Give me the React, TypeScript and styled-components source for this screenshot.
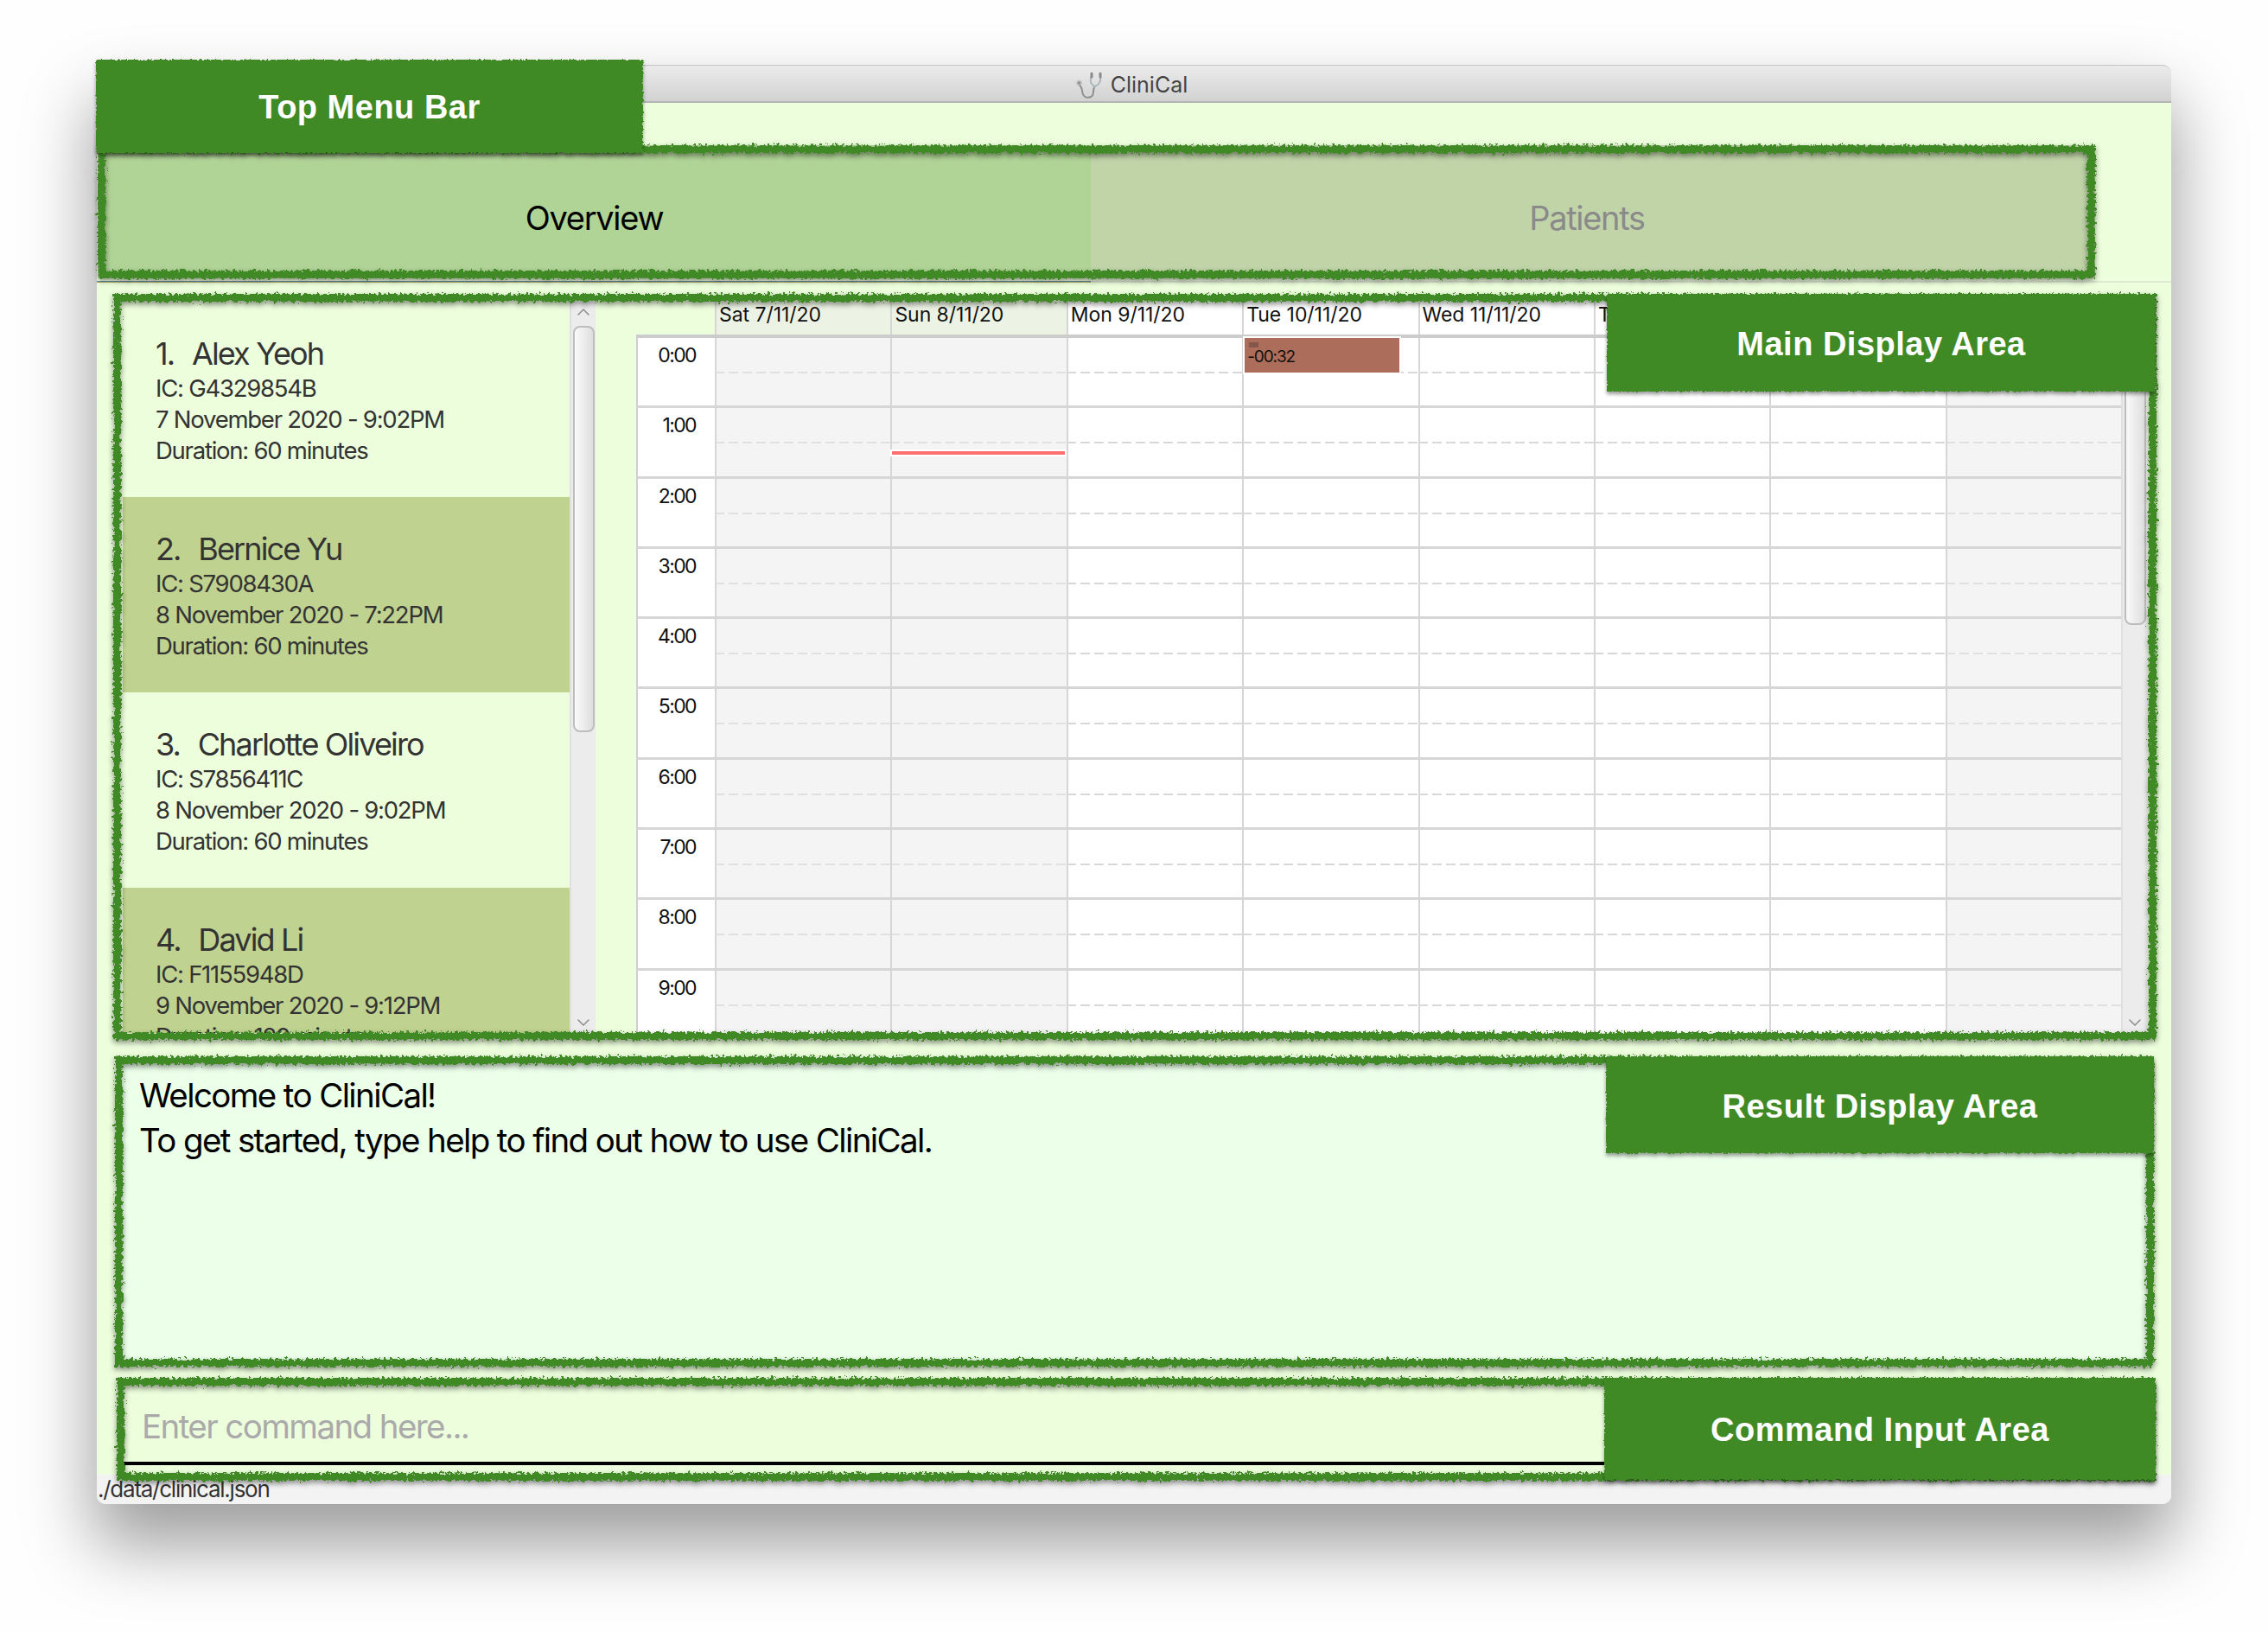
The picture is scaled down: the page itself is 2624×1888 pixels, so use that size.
import styled, { createGlobalStyle } from "styled-components";
import { ChevronDown, ChevronUp } from "lucide-react";

const GlobalStyle = createGlobalStyle`
  html, body {
    margin: 0;
    background: #fefefe;
  }
`;

const GREEN = "#3f8a28";
const UI_FONT = `Inter, "Liberation Sans", sans-serif`;

const Page = styled.div`
  width: 2624px;
  height: 1888px;
  box-sizing: border-box;
  padding: 75px 112px 0;
  overflow: hidden;
  font-family: ${UI_FONT};
`;
const Window = styled.div`
  position: relative;
  width: 2400px;
  height: 1665px;
  display: flex;
  flex-direction: column;
  border-radius: 10px;
  background: #ecfedc;
  box-shadow: 0 44px 80px 4px rgba(0, 0, 0, 0.38);
`;
const TitleBar = styled.div`
  height: 44px;
  flex-shrink: 0;
  box-sizing: border-box;
  display: flex;
  align-items: center;
  justify-content: center;
  gap: 9px;
  padding: 3px 6px 0 0;
  border-radius: 10px 10px 0 0;
  border-top: 1px solid #c4c4c4;
  border-bottom: 2px solid #b4b4b4;
  background: linear-gradient(#ebebeb, #d2d2d2);
  color: #444;
  font-size: 25px;
`;
const TabArea = styled.div`
  height: 208px;
  flex-shrink: 0;
  box-sizing: border-box;
  padding: 49px 0 0 1px;
  border-bottom: 2px solid #dfe8d4;
  position: relative;
`;
const Edge = styled.div<{ $bottom?: number }>`
  position: absolute;
  inset: 0 0 ${(p) => -(p.$bottom ?? 0)}px 0;
  box-sizing: border-box;
  border: 9px solid ${GREEN};
  filter: url(#rough) drop-shadow(0 3px 3px rgba(0, 0, 0, 0.45));
  pointer-events: none;
  z-index: 3;
`;
const TabFrame = styled.div`
  position: relative;
  width: 2311px;
  height: 154px;
  display: flex;
  background: #c0d4a8;
`;
const Tab = styled.div<{ $active?: boolean }>`
  width: ${(p) => (p.$active ? 1149 : 1148)}px;
  display: flex;
  align-items: center;
  justify-content: center;
  padding-top: 14px;
  box-sizing: border-box;
  font-size: 38px;
  letter-spacing: -1.3px;
  color: ${(p) => (p.$active ? "#000" : "#8a8a8a")};
  background: ${(p) => (p.$active ? "#b0d396" : "transparent")};
`;
const SelectedLine = styled.div`
  position: absolute;
  left: 0;
  bottom: -2px;
  width: 1150px;
  height: 2px;
  background: linear-gradient(#3f78c8, #d9c84a);
`;
const Body = styled.div`
  flex: 1;
  min-height: 0;
  display: flex;
  flex-direction: column;
`;
const MainFrame = styled.section`
  position: relative;
  height: 863px;
  flex-shrink: 0;
  box-sizing: border-box;
  margin: 13px 17px 0 19px;
  padding: 9px 10px 8px 11px;
  display: flex;
`;
const ListPane = styled.div`
  width: 517px;
  flex-shrink: 0;
  overflow: hidden;
`;
const Card = styled.div<{ $odd: boolean }>`
  height: 226px;
  box-sizing: border-box;
  padding: 38px 0 0 38px;
  color: #333;
  background: ${(p) => (p.$odd ? "#ecfedc" : "#bfd28f")};
`;
const CardTitle = styled.div`
  font-size: 36px;
  line-height: 44px;
  letter-spacing: -1.85px;
  white-space: pre;
`;
const CardNumber = styled.span`
  margin-right: 4px;
`;
const CardLine = styled.div`
  font-size: 27.5px;
  line-height: 36px;
  letter-spacing: -1.25px;
`;
const ScrollTrack = styled.div<{ $thumbTop: number; $thumbHeight: number }>`
  position: relative;
  width: 30px;
  flex-shrink: 0;
  overflow: hidden;
  display: flex;
  flex-direction: column;
  justify-content: space-between;
  align-items: center;
  background: #ececec;
  border-left: 2px solid #e0e0e0;
  box-sizing: border-box;
  color: #8c8c8c;

  &::before {
    content: "";
    position: absolute;
    left: 2px;
    right: 1px;
    top: ${(p) => p.$thumbTop}px;
    height: ${(p) => p.$thumbHeight}px;
    box-sizing: border-box;
    border: 2px solid #bdbdbd;
    border-radius: 8px;
    background: linear-gradient(90deg, #fafafa, #dedede);
  }
`;
const Calendar = styled.div`
  width: 1718px;
  margin-left: 47px;
  flex-shrink: 0;
  overflow: hidden;
`;
const CalHeader = styled.div`
  display: grid;
  grid-template-columns: 91px repeat(8, 203.4px);
  height: 38px;
`;
const DayHead = styled.div<{ $weekend?: boolean; $blank?: boolean }>`
  box-sizing: border-box;
  padding-left: 3px;
  font-size: 23px;
  line-height: 31px;
  letter-spacing: -0.05px;
  color: #111;
  white-space: nowrap;
  overflow: hidden;
  border-left: ${(p) => (p.$blank ? "none" : "2px solid #d6d6d6")};
  background: ${(p) => (p.$blank ? "transparent" : p.$weekend ? "#edf3e4" : "#fff")};
`;
const CalGrid = styled.div`
  display: grid;
  grid-template-columns: 91px repeat(8, 203.4px);
  grid-auto-rows: 81.3px;
  border-top: 4px solid #cccccc;
`;
const TimeCell = styled.div`
  box-sizing: border-box;
  text-align: right;
  padding: 5px 22px 0 0;
  font-size: 23px;
  line-height: 30px;
  letter-spacing: -1.6px;
  color: #111;
  background: #fff;
  border-left: 2px solid #cfcfcf;
  border-bottom: 3px solid #d6d6d6;
`;
const SlotCell = styled.div<{ $weekend: boolean }>`
  position: relative;
  box-sizing: border-box;
  background: ${(p) => (p.$weekend ? "#f4f4f4" : "#fff")};
  border-left: 2px solid #d6d6d6;
  border-bottom: 3px solid #d6d6d6;

  &::after {
    content: "";
    position: absolute;
    left: -2px;
    right: 0;
    top: 39px;
    height: 2px;
    background: repeating-linear-gradient(90deg, #d8d8d8 0 11px, transparent 11px 16px);
    opacity: ${(p) => (p.$weekend ? 0.7 : 1)};
  }
`;
const Appointment = styled.div`
  position: absolute;
  left: 1px;
  top: 0;
  width: 179px;
  height: 40px;
  box-sizing: content-box;
  background: #ac6e5a;
  box-shadow: 0 0 0 2px #fff;
  color: #111;
  font-size: 19px;
  line-height: 22px;
  letter-spacing: -1.1px;
  padding: 0;
  z-index: 1;

  &::before {
    content: "";
    display: block;
    width: 11px;
    height: 6px;
    margin: 5px 0 0 5px;
    background: #85574a;
  }
`;
const AppointmentText = styled.div`
  padding-left: 3px;
`;
const NowLine = styled.div`
  position: absolute;
  left: 0;
  right: 2px;
  top: 50px;
  height: 4px;
  background: #ff7070;
  box-shadow: 0 0 0 2px #fff;
  z-index: 1;
`;
const ResultFrame = styled.section`
  position: relative;
  height: 359px;
  flex-shrink: 0;
  box-sizing: border-box;
  margin: 19px 20px 0 21px;
  padding: 19px 0 0 28px;
  background: #ebffe9;
  color: #000;
  font-size: 38.5px;
  line-height: 52px;
  letter-spacing: -1.62px;
`;
const CommandFrame = styled.section`
  position: relative;
  height: 112px;
  flex-shrink: 0;
  box-sizing: border-box;
  margin: 13px 18px 0 23px;
  padding: 9px 0 0 7px;
  z-index: 2;
`;
const CommandInput = styled.input`
  display: block;
  width: 1730px;
  height: 92px;
  box-sizing: border-box;
  padding: 6px 0 0 22px;
  border: 0;
  border-bottom: 4px solid #000;
  outline: none;
  border-radius: 0;
  background: #ecfedc;
  font-family: ${UI_FONT};
  font-size: 38.5px;
  letter-spacing: -1.6px;

  &::placeholder {
    color: #aaaaaa;
    opacity: 1;
  }
`;
const StatusBar = styled.div`
  flex: 1;
  box-sizing: border-box;
  padding: 0 0 0 1px;
  border-radius: 0 0 10px 10px;
  background: #f3f3f3;
  color: #333;
  font-size: 26px;
  line-height: 33px;
  letter-spacing: -1.25px;
`;
const Callout = styled.div<{ $w: number; $h: number; $top: number; $left?: number }>`
  position: absolute;
  top: ${(p) => p.$top}px;
  ${(p) => (p.$left !== undefined ? `left: ${p.$left}px;` : "right: 0;")}
  width: ${(p) => p.$w}px;
  height: ${(p) => p.$h}px;
  display: flex;
  align-items: center;
  justify-content: center;
  padding-top: 3px;
  box-sizing: border-box;
  z-index: 4;
  color: #fff;
  font-family: "Liberation Sans", Arial, sans-serif;
  font-weight: 700;
  font-size: 38px;
  letter-spacing: 0.5px;

  &::before {
    content: "";
    position: absolute;
    inset: 0;
    background: ${GREEN};
    filter: url(#roughFine) drop-shadow(0 3px 2px rgba(0, 0, 0, 0.4));
  }
`;
const CalloutText = styled.span`
  position: relative;
`;

function RoughFilters() {
  return (
    <svg width="0" height="0" style={{ position: "absolute" }} aria-hidden="true">
      <defs>
        <filter id="rough" x="-2%" y="-5%" width="104%" height="110%">
          <feTurbulence type="fractalNoise" baseFrequency="0.28" numOctaves="3" seed="4" />
          <feDisplacementMap in="SourceGraphic" scale="9" xChannelSelector="R" yChannelSelector="G" />
        </filter>
        <filter id="roughFine" x="-2%" y="-5%" width="104%" height="110%">
          <feTurbulence type="fractalNoise" baseFrequency="0.35" numOctaves="2" seed="9" />
          <feDisplacementMap in="SourceGraphic" scale="4" xChannelSelector="R" yChannelSelector="G" />
        </filter>
      </defs>
    </svg>
  );
}

function Stethoscope() {
  return (
    <svg width="32" height="31" viewBox="0 0 32 31" fill="none" aria-hidden="true">
      <circle cx="4.5" cy="13" r="3.6" fill="#c9c9c9" />
      <circle cx="4.5" cy="13" r="1.8" fill="#8f8f8f" />
      <path d="M5.5 16 C8 18 7.5 22 9 26 C11 31 19 31 20.5 26 C21.5 22 21 19 22.5 17" stroke="#8f8f8f" strokeWidth="2" strokeLinecap="round" />
      <path d="M22.5 17 C17 14 17 9 19 5 M22.5 17 C28 15 30 10 29 5" stroke="#a9b4b8" strokeWidth="2" strokeLinecap="round" />
      <path d="M19 2 V6 M29 2 V6" stroke="#8a8a8a" strokeWidth="3" strokeLinecap="round" />
    </svg>
  );
}

const appointments = [
  { name: "Alex Yeoh", ic: "G4329854B", when: "7 November 2020 - 9:02PM", mins: 60 },
  { name: "Bernice Yu", ic: "S7908430A", when: "8 November 2020 - 7:22PM", mins: 60 },
  { name: "Charlotte Oliveiro", ic: "S7856411C", when: "8 November 2020 - 9:02PM", mins: 60 },
  { name: "David Li", ic: "F1155948D", when: "9 November 2020 - 9:12PM", mins: 120 },
];
const days = [
  "Sat 7/11/20",
  "Sun 8/11/20",
  "Mon 9/11/20",
  "Tue 10/11/20",
  "Wed 11/11/20",
  "Thu 12/11/20",
  "Fri 13/11/20",
  "Sat 14/11/20",
];
const WEEKEND = [0, 1, 7];
const hours = Array.from({ length: 11 }, (_, i) => i);

function App() {
  return (
    <>
      <GlobalStyle />
      <RoughFilters />
      <Page>
        <Window>
          <Callout $w={633} $h={108} $top={-6} $left={-1}>
            <CalloutText>Top Menu Bar</CalloutText>
          </Callout>
          <TitleBar>
            <Stethoscope />
            CliniCal
          </TitleBar>
          <TabArea>
            <TabFrame>
              <Tab $active>Overview</Tab>
              <Tab>Patients</Tab>
              <Edge />
            </TabFrame>
            <SelectedLine />
          </TabArea>
          <Body>
            <MainFrame>
              <ListPane>
                {appointments.map((a, i) => (
                  <Card key={a.ic} $odd={i % 2 === 0}>
                    <CardTitle>
                      <CardNumber>{i + 1}.</CardNumber>
                      {"  "}
                      {a.name}
                    </CardTitle>
                    <CardLine>IC: {a.ic}</CardLine>
                    <CardLine>{a.when}</CardLine>
                    <CardLine>Duration: {a.mins} minutes</CardLine>
                  </Card>
                ))}
              </ListPane>
              <ScrollTrack $thumbTop={28} $thumbHeight={470}>
                <ChevronUp size={24} strokeWidth={1.5} />
                <ChevronDown size={24} strokeWidth={1.5} />
              </ScrollTrack>
              <Calendar>
                <CalHeader>
                  <DayHead $blank />
                  {days.map((d, i) => (
                    <DayHead key={d} $weekend={i < 2}>
                      {d}
                    </DayHead>
                  ))}
                </CalHeader>
                <CalGrid>
                  {hours.map((h) =>
                    [
                      <TimeCell key={`t${h}`}>{h}:00</TimeCell>,
                      ...days.map((d, i) => (
                        <SlotCell key={`${d}${h}`} $weekend={WEEKEND.includes(i)}>
                          {h === 0 && i === 3 && (
                            <Appointment>
                              <AppointmentText>-00:32</AppointmentText>
                            </Appointment>
                          )}
                          {h === 1 && i === 1 && <NowLine />}
                        </SlotCell>
                      )),
                    ]
                  )}
                </CalGrid>
              </Calendar>
              <ScrollTrack $thumbTop={30} $thumbHeight={344}>
                <ChevronUp size={24} strokeWidth={1.5} />
                <ChevronDown size={24} strokeWidth={1.5} />
              </ScrollTrack>
              <Edge />
              <Callout $w={635} $h={113} $top={0} $left={1728}>
                <CalloutText>Main Display Area</CalloutText>
              </Callout>
            </MainFrame>
            <ResultFrame>
              Welcome to CliniCal!
              <br />
              To get started, type help to find out how to use CliniCal.
              <Edge />
              <Callout $w={634} $h={112} $top={0}>
                <CalloutText>Result Display Area</CalloutText>
              </Callout>
            </ResultFrame>
            <CommandFrame>
              <CommandInput placeholder="Enter command here..." readOnly />
              <Edge $bottom={7} />
              <Callout $w={638} $h={118} $top={0}>
                <CalloutText>Command Input Area</CalloutText>
              </Callout>
            </CommandFrame>
            <StatusBar>./data/clinical.json</StatusBar>
          </Body>
        </Window>
      </Page>
    </>
  );
}

export default App;
